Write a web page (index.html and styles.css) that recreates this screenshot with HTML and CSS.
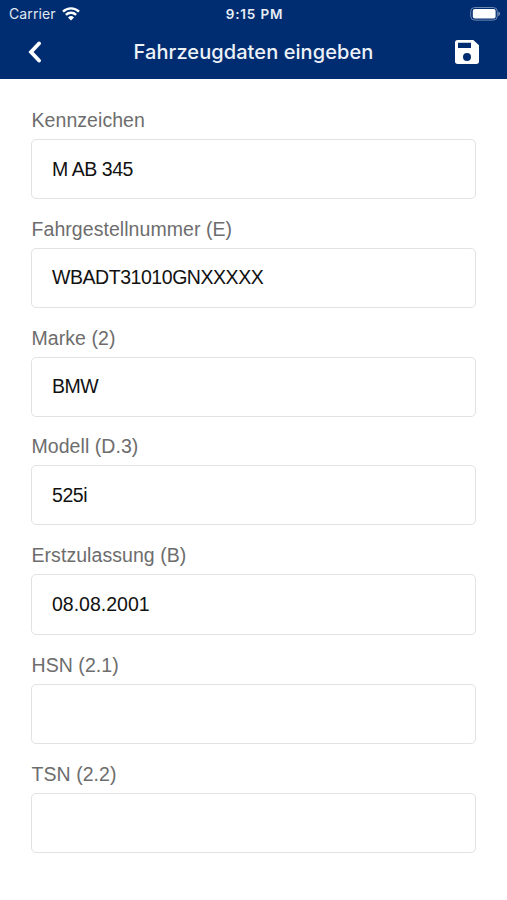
FILE: index.html
```html
<!DOCTYPE html>
<html lang="de">
<head>
<meta charset="utf-8">
<title>Fahrzeugdaten eingeben</title>
<link rel="stylesheet" href="styles.css">
</head>
<body>
<header class="header">
  <div class="status">
    <div class="carrier"><span>Carrier</span>
      <svg class="wifi" viewBox="0 0 18 14"><path class="arc" d="M1 4.7a11.4 11.4 0 0 1 16 0M3.9 7.8a7.3 7.3 0 0 1 10.2 0"/><path d="M6 10.4a4.4 4.4 0 0 1 6 0L9 13.4Z"/></svg>
    </div>
    <span class="time">9:15 PM</span>
    <div class="power"><svg class="battery" viewBox="0 0 30 14"><rect class="case" x=".7" y=".5" width="26.6" height="12.6" rx="4"/><rect x="2.8" y="2.1" width="22.8" height="9.4" rx="2"/><path class="cap" d="M28.2 4.5q2 .6 2 2.3t-2 2.3Z"/></svg></div>
  </div>
  <nav class="nav">
    <svg class="back" viewBox="0 0 14 22"><path d="M11 2.5 3 11l8 8.5"/></svg>
    <h1 class="title">Fahrzeugdaten eingeben</h1>
    <svg class="save" viewBox="0 0 24 24"><path fill-rule="evenodd" d="M2.7 0H18.300L24 5.200V21.300A2.700 2.700 0 0 1 21.300 24H2.700A2.700 2.700 0 0 1 0 21.300V2.700A2.700 2.700 0 0 1 2.700 0ZM3 2.800V8H16V2.800ZM12 13a4 4 0 1 0 0 8 4 4 0 0 0 0-8Z"/></svg>
  </nav>
</header>
<main class="form">
  <label class="field"><span class="label">Kennzeichen</span><span class="box">M AB 345</span></label>
  <label class="field"><span class="label">Fahrgestellnummer (E)</span><span class="box">WBADT31010GNXXXXX</span></label>
  <label class="field"><span class="label">Marke (2)</span><span class="box">BMW</span></label>
  <label class="field"><span class="label">Modell (D.3)</span><span class="box">525i</span></label>
  <label class="field date"><span class="label">Erstzulassung (B)</span><span class="box">08.08.2001</span></label>
  <label class="field"><span class="label">HSN (2.1)</span><span class="box"></span></label>
  <label class="field"><span class="label">TSN (2.2)</span><span class="box"></span></label>
</main>
</body>
</html>
```
FILE: styles.css
```css
* { box-sizing: border-box; }
body { margin: 0; background: #fff; font-family: "Liberation Sans", Arial, sans-serif; }
.header { height: 79px; background: #002d72; color: #fff; font-family: Inter, sans-serif; }
.status { height: 27px; display: grid; grid-template-columns: 1fr auto 1fr; align-items: center; padding: 0 7px 0 9px; font-size: 14px; }
.carrier { display: flex; align-items: center; gap: 6px; color: #e1e8f2; letter-spacing: .1px; }
.wifi { width: 18px; height: 14px; fill: #fff; }
.wifi .arc { fill: none; stroke: #fff; stroke-width: 2.4; }
.time { font-size: 13.5px; font-weight: 600; letter-spacing: .85px; color: #e8eef6; }
.power { display: flex; justify-content: flex-end; }
.battery { width: 30px; height: 14px; fill: #fff; }
.battery .case { fill: none; stroke: #6f89b0; }
.battery .cap { fill: #6f89b0; }
.nav { height: 52px; display: grid; grid-template-columns: 40px 1fr 40px; align-items: center; padding: 0 28px 2px; }
.back { width: 14px; height: 22px; fill: none; stroke: #fff; stroke-width: 3.8; stroke-linecap: round; }
.title { margin: 0; font-size: 20px; font-weight: 550; letter-spacing: .08px; text-align: center; white-space: nowrap; color: #edf2f8; }
.save { width: 24px; height: 24px; fill: #fff; justify-self: end; }
.form { padding: 30px 31px 0; }
.field { display: block; height: 108.8px; }
.date { height: 109.8px; }
.label { display: block; height: 30px; padding-left: .5px; line-height: 23px; font-size: 19.5px; letter-spacing: .06px; color: #6d6d6d; }
.box { display: flex; align-items: center; height: 60px; border: 1px solid #e2e2e2; border-radius: 5px; padding: 0 20px; font-size: 19.5px; letter-spacing: -.45px; color: #111; }
.date .box { height: 61px; letter-spacing: 0; }
```
